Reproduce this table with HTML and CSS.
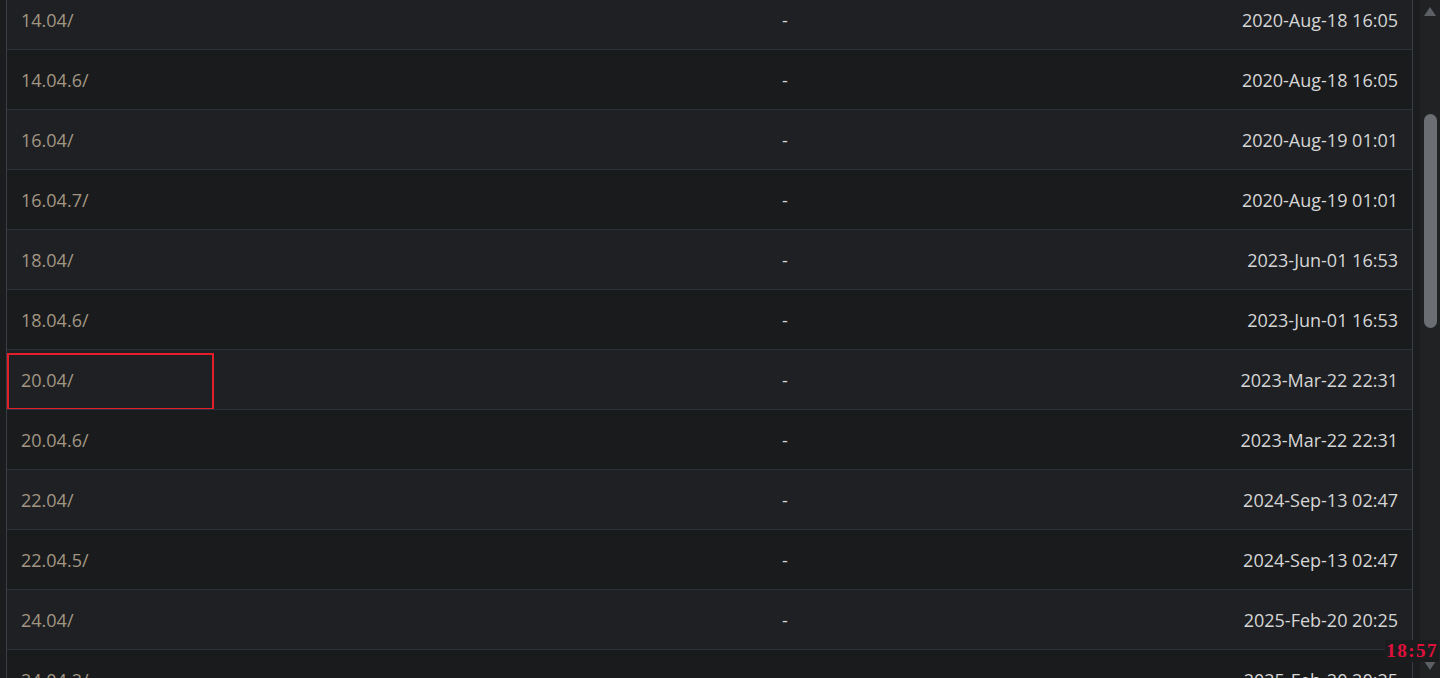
FILE: index.html
```html
<!DOCTYPE html>
<html>
<head>
<meta charset="utf-8">
<link rel="stylesheet" href="styles.css">
</head>
<body>
<div class="page">
  <main class="content">
    <div class="listing">
      <div class="row"><span class="name">14.04/</span><span class="size">-</span><span class="date">2020-Aug-18 16:05</span></div>
      <div class="row"><span class="name">14.04.6/</span><span class="size">-</span><span class="date">2020-Aug-18 16:05</span></div>
      <div class="row"><span class="name">16.04/</span><span class="size">-</span><span class="date">2020-Aug-19 01:01</span></div>
      <div class="row"><span class="name">16.04.7/</span><span class="size">-</span><span class="date">2020-Aug-19 01:01</span></div>
      <div class="row"><span class="name">18.04/</span><span class="size">-</span><span class="date">2023-Jun-01 16:53</span></div>
      <div class="row"><span class="name">18.04.6/</span><span class="size">-</span><span class="date">2023-Jun-01 16:53</span></div>
      <div class="row marked"><span class="name">20.04/</span><span class="size">-</span><span class="date">2023-Mar-22 22:31</span><span class="highlight"></span></div>
      <div class="row"><span class="name">20.04.6/</span><span class="size">-</span><span class="date">2023-Mar-22 22:31</span></div>
      <div class="row"><span class="name">22.04/</span><span class="size">-</span><span class="date">2024-Sep-13 02:47</span></div>
      <div class="row"><span class="name">22.04.5/</span><span class="size">-</span><span class="date">2024-Sep-13 02:47</span></div>
      <div class="row"><span class="name">24.04/</span><span class="size">-</span><span class="date">2025-Feb-20 20:25</span></div>
      <div class="row"><span class="name">24.04.2/</span><span class="size">-</span><span class="date">2025-Feb-20 20:25</span></div>
    </div>
  </main>
  <aside class="scrollbar">
    <span class="arrow up"></span>
    <span class="track"><span class="thumb"></span></span>
    <span class="arrow down"></span>
  </aside>
</div>
<div class="clock">18:57</div>
</body>
</html>
```
FILE: styles.css
```css
html, body {
  margin: 0;
  padding: 0;
  height: 100%;
  overflow: hidden;
  background: #1b1c1e;
}
.page {
  display: flex;
  height: 678px;
  font-family: "Open Sans", "Noto Sans", sans-serif;
}
.content {
  flex: 1;
  padding: 0 7px 0 6px;
  overflow: hidden;
}
.listing {
  margin-top: -11px;
  border-left: 1px solid #3a3e44;
  border-right: 1px solid #3a3e44;
}
.row {
  position: relative;
  display: grid;
  grid-template-columns: 701px 154px 1fr;
  align-items: center;
  height: 59px;
  border-top: 1px solid #2b323b;
  font-size: 18px;
  line-height: 24px;
  padding-top: 1px;
  box-sizing: border-box;
  height: 60px;
  background: #1e2023;
}
.row:nth-child(even) {
  background: #1a1b1d;
}
.name {
  padding-left: 14px;
  color: #a29683;
}
.size {
  text-align: center;
  color: #d6d6d6;
}
.date {
  text-align: right;
  padding-right: 14px;
  color: #d6d6d6;
}
.highlight {
  position: absolute;
  left: 0;
  top: 3px;
  width: 203px;
  height: 53px;
  border: 2px solid #e61e2a;
}
.scrollbar {
  width: 20px;
  background: #202224;
  display: flex;
  flex-direction: column;
  align-items: center;
}
.arrow {
  width: 0;
  height: 0;
  border-left: 6px solid transparent;
  border-right: 6px solid transparent;
}
.arrow.up {
  margin-top: 7px;
  border-bottom: 9px solid #5c5f63;
}
.arrow.down {
  margin-bottom: 8px;
  border-top: 9px solid #5c5f63;
}
.track {
  flex: 1;
  width: 13px;
  padding-top: 98px;
}
.thumb {
  display: block;
  width: 13px;
  height: 214px;
  border-radius: 7px;
  background: #6b6e72;
}
.clock {
  position: fixed;
  right: 1px;
  top: 640px;
  padding: 0 1px;
  background: #1b1c1e;
  color: #e0103c;
  font-family: "Liberation Serif", serif;
  font-weight: bold;
  font-size: 19px;
  letter-spacing: 1.5px;
  line-height: 22px;
}
```
